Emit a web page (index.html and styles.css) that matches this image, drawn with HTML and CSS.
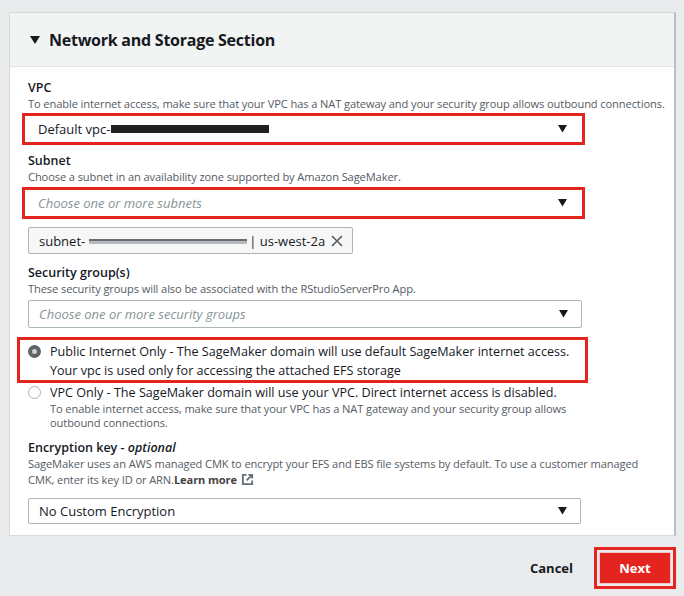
FILE: index.html
```html
<!DOCTYPE html>
<html>
<head>
<meta charset="utf-8">
<link rel="stylesheet" href="styles.css">
</head>
<body>
<div class="page">
  <div class="card">
    <div class="card-header">
      <svg class="caret" width="10" height="9" viewBox="0 0 10 9"><path d="M0 0 H10 L5 8 Z" fill="#16191f"/></svg>
      <h2>Network and Storage Section</h2>
    </div>
    <div class="card-body">
      <div class="field">
        <div class="label">VPC</div>
        <div class="desc nowrap">To enable internet access, make sure that your VPC has a NAT gateway and your security group allows outbound connections.</div>
        <div class="hl hl-select">
          <div class="select bare">
            <span class="value">Default vpc-</span><span class="redact-black"></span>
            <svg class="arrow" width="9" height="8" viewBox="0 0 9 8"><path d="M0 0 H9 L4.5 7.5 Z" fill="#16191f"/></svg>
          </div>
        </div>
      </div>
      <div class="field f-subnet">
        <div class="label">Subnet</div>
        <div class="desc">Choose a subnet in an availability zone supported by Amazon SageMaker.</div>
        <div class="hl hl-select">
          <div class="select bare">
            <span class="placeholder">Choose one or more subnets</span>
            <svg class="arrow" width="9" height="8" viewBox="0 0 9 8"><path d="M0 0 H9 L4.5 7.5 Z" fill="#16191f"/></svg>
          </div>
        </div>
        <div class="token">
          <span class="tok-text">subnet-</span><span class="redact-gray"></span><span class="tok-text">| us-west-2a</span>
          <svg class="x" width="14" height="14" viewBox="0 0 14 14"><path d="M2 2 L12 12 M12 2 L2 12" stroke="#545b64" stroke-width="1.6" fill="none"/></svg>
        </div>
      </div>
      <div class="field f-sg">
        <div class="label">Security group(s)</div>
        <div class="desc">These security groups will also be associated with the RStudioServerPro App.</div>
        <div class="select">
          <span class="placeholder">Choose one or more security groups</span>
          <svg class="arrow" width="9" height="8" viewBox="0 0 9 8"><path d="M0 0 H9 L4.5 7.5 Z" fill="#16191f"/></svg>
        </div>
      </div>
      <div class="hl hl-radio">
        <div class="radio-row">
          <span class="radio checked"></span>
          <div class="radio-text">Public Internet Only - The SageMaker domain will use default SageMaker internet access.<br>Your vpc is used only for accessing the attached EFS storage</div>
        </div>
      </div>
      <div class="radio-row r2">
        <span class="radio"></span>
        <div>
          <div class="radio-text">VPC Only - The SageMaker domain will use your VPC. Direct internet access is disabled.</div>
          <div class="desc rdesc">To enable internet access, make sure that your VPC has a NAT gateway and your security group allows outbound connections.</div>
        </div>
      </div>
      <div class="field f-enc">
        <div class="label">Encryption key - <i>optional</i></div>
        <div class="desc">SageMaker uses an AWS managed CMK to encrypt your EFS and EBS file systems by default. To use a customer managed CMK, enter its key ID or ARN.<span class="learn">Learn more</span><svg class="ext" width="13" height="13" viewBox="0 0 14 14"><path d="M6 2 H2 V12 H12 V8" stroke="#687078" stroke-width="2" fill="none"/><path d="M8 2 H12 V6 M12 2 L6 8" stroke="#687078" stroke-width="2" fill="none"/></svg>
        </div>
        <div class="select enc">
          <span class="value">No Custom Encryption</span>
          <svg class="arrow" width="9" height="8" viewBox="0 0 9 8"><path d="M0 0 H9 L4.5 7.5 Z" fill="#16191f"/></svg>
        </div>
      </div>
    </div>
  </div>
  <div class="actions">
    <button class="btn-cancel">Cancel</button>
    <div class="hl hl-next"><button class="btn-next">Next</button></div>
  </div>
</div>
</body>
</html>
```

FILE: styles.css
```css
* { box-sizing: border-box; }
body {
  margin: 0;
  background: #eaebed;
  font-family: "Open Sans", "Liberation Sans", sans-serif;
  color: #16191f;
}
.page {
  padding: 12px 8px 0 9px;
}
.card {
  background: #fff;
  border: 1px solid #d5dbdb;
  border-right: 2px solid #b8bec2;
  width: 667px;
}
.card-header {
  height: 54px;
  background: #f2f3f3;
  border-bottom: 1px solid #e1e4e4;
  display: flex;
  align-items: center;
  padding-left: 20px;
}
.caret {
  margin-right: 9px;
  margin-top: 1px;
}
.card-header h2 {
  margin: 0;
  font-size: 16px;
  font-weight: 700;
  letter-spacing: -0.25px;
}
.card-body {
  padding: 13px 18px 11px 18px;
}
.label {
  font-size: 12.5px;
  font-weight: 600;
  line-height: 16px;
}
.desc {
  font-size: 11.1px;
  color: #545b64;
  line-height: 15px;
  letter-spacing: -0.1px;
}
.nowrap { white-space: nowrap; }
.hl {
  border: 3px solid #e4241f;
}
.hl-select {
  margin: 2px 0 0 -6px;
  width: 563px;
  height: 32px;
}
.select {
  height: 28px;
  border: 1px solid #aab7b8;
  border-radius: 2px;
  display: flex;
  align-items: center;
  padding: 0 10px;
  width: 554px;
  font-size: 13px;
}
.select.bare {
  border: none;
  height: 26px;
  padding-left: 13px;
  width: 100%;
}
.value { color: #16191f; font-weight: 500; }
.placeholder { color: #879596; font-style: italic; }
.arrow {
  margin-left: auto;
  margin-right: 3px;
}
.select.bare .arrow { margin-right: 5px; }
.redact-black {
  display: inline-block;
  width: 158px;
  height: 8px;
  background: #202020;
  margin-left: 1px;
}
.f-subnet { margin-top: 8px; }
.f-subnet .hl-select { margin-top: 3px; }
.token {
  margin-top: 8px;
  width: 325px;
  height: 27px;
  border: 1px solid #aab7b8;
  border-radius: 2px;
  background: #f7f7f7;
  display: flex;
  align-items: center;
  padding: 0 8px 0 10px;
  font-size: 13px;
}
.tok-text { font-weight: 500; }
.redact-gray {
  display: inline-block;
  width: 158px;
  height: 5px;
  background: linear-gradient(#6a6e72 0 2px, #b5b9bc 2px 5px);
  margin: 2px 2px 0 4px;
}
.x { margin-left: auto; }
.f-sg { margin-top: 11px; }
.f-sg .select { margin-top: 4px; }
.hl-radio {
  margin: 9px 0 0 -11px;
  width: 571px;
  padding: 2px 0 0 8px;
}
.radio-row {
  display: flex;
  align-items: flex-start;
}
.radio {
  width: 13px;
  height: 13px;
  border-radius: 50%;
  border: 1px solid #aab7b8;
  flex: none;
  margin: 3px 9px 0 0;
  background: #fff;
}
.radio.checked {
  border: 4px solid #5f6468;
  background: #d0d3d5;
}
.radio-text {
  font-size: 12.6px;
  line-height: 19px;
  font-weight: 500;
}
.r2 { margin-top: 0; }
.rdesc { line-height: 14px; max-width: 530px; }
.f-enc { margin-top: 10px; }
.f-enc .desc { line-height: 16px; max-width: 615px; }
.learn { font-weight: 700; color: #444; margin-right: 4px; }
.ext { vertical-align: -2px; }
.select.enc { margin-top: 10px; height: 26px; width: 553px; }
.actions {
  display: flex;
  justify-content: flex-end;
  align-items: center;
  padding-top: 11px;
}
.btn-cancel {
  background: none;
  border: none;
  padding: 0;
  font-family: inherit;
  font-size: 13px;
  font-weight: 700;
  color: #16191f;
  margin-right: 21px;
}
.hl-next {
  padding: 2px;
  width: 82px;
  height: 42px;
}
.btn-next {
  width: 100%;
  height: 100%;
  background: #e4241f;
  border: 1px solid #f3c7c4;
  color: #fff;
  font-family: inherit;
  font-size: 13px;
  font-weight: 700;
  border-radius: 1px;
}
```
